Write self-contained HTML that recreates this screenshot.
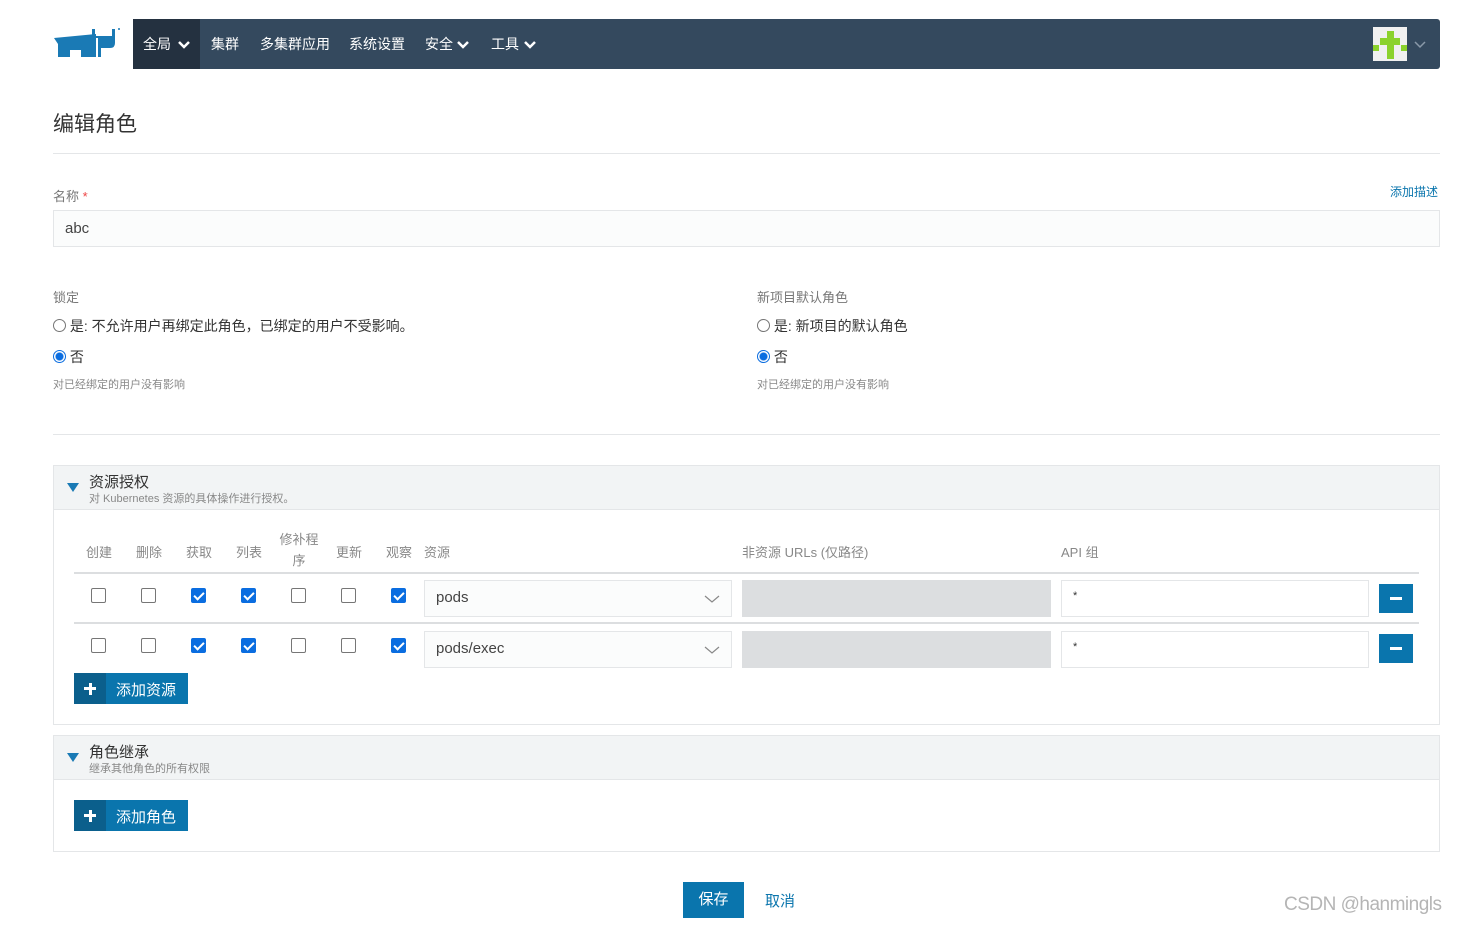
<!DOCTYPE html>
<html><head><meta charset="utf-8"><style>
*{box-sizing:border-box;margin:0;padding:0}
body{width:1465px;height:927px;background:#fff;font-family:"Liberation Sans","Noto Sans CJK SC",sans-serif;color:#333;position:relative;overflow:hidden}
.a{position:absolute}
.nav{left:133px;top:19px;width:1307px;height:50px;background:#34495e;border-radius:0 3px 3px 0}
.nav span{position:absolute;top:15px;color:#fff;font-size:14px}
.nav svg{position:absolute;top:21px}
.lbl{font-size:13px;color:#777}
.hr{height:1px;background:#e4e6e8;left:53px;width:1387px}
.radio{width:13px;height:13px;border:1px solid #767676;border-radius:50%;display:inline-block;vertical-align:-1px}
.radio.on{border:1px solid #0a6de0;background:radial-gradient(circle,#0a6de0 3.5px,#fff 4.5px)}
.cb{width:15px;height:15px;border:1px solid #767676;border-radius:2px;background:#fff}
.cb.on{background:#0a6de0;border-color:#0a6de0}
.cb.on:after{content:"";position:absolute;left:4px;top:1px;width:4px;height:8px;border:solid #fff;border-width:0 2px 2px 0;transform:rotate(45deg)}
.th{font-size:13px;color:#888}
.box{border:1px solid #e4e6e8;background:#fbfcfc}
.btn{background:#0a75ad;color:#fff;font-size:15px}
.sel svg{position:absolute;right:11px;top:13px}
</style></head><body>
<svg class="a" style="left:50px;top:24px" width="75" height="40" viewBox="0 0 75 40"><g fill="#1a7ab5"><path d="M4,14 L46,10 L46,33 L31,33 L31,26 L20,26 L20,33 L8,33 L8,20 Z"/><path d="M42,5 L45,5 L45,12 L62,12 L62,5 L65,5 L65,19 Q65,24 60,24 L51,24 L51,33 L48,33 L48,14 L42,14 Z"/></g><circle cx="69" cy="5" r="1" fill="#1a7ab5"/></svg>
<div class="a nav"><div class="a" style="left:0;top:0;width:67px;height:50px;background:#243140"></div>
<span style="left:10px">全局</span><svg style="left:45px" width="12" height="9" viewBox="0 0 12 9"><path d="M1 2l5 5 5-5" stroke="#fff" stroke-width="2.5" fill="none"/></svg>
<span style="left:78px">集群</span><span style="left:127px">多集群应用</span><span style="left:216px">系统设置</span>
<span style="left:292px">安全</span><svg style="left:324px" width="12" height="9" viewBox="0 0 12 9"><path d="M1 2l5 5 5-5" stroke="#fff" stroke-width="2.5" fill="none"/></svg>
<span style="left:358px">工具</span><svg style="left:391px" width="12" height="9" viewBox="0 0 12 9"><path d="M1 2l5 5 5-5" stroke="#fff" stroke-width="2.5" fill="none"/></svg>
<div class="a" style="left:1240px;top:8px;width:34px;height:34px;background:#f0f0f0"><div class="a" style="left:14px;top:4px;width:7px;height:28px;background:#8bd22c"></div><div class="a" style="left:7px;top:11px;width:20px;height:7px;background:#8bd22c"></div><div class="a" style="left:0;top:18px;width:34px;height:6px;background:linear-gradient(90deg,#8bd22c 6px,transparent 6px,transparent 28px,#8bd22c 28px)"></div></div>
<svg style="left:1281px" width="12" height="9" viewBox="0 0 12 9"><path d="M1 2l5 5 5-5" stroke="#8a99a8" stroke-width="1.5" fill="none"/></svg></div>
<div class="a" style="left:53px;top:108px;font-size:21px">编辑角色</div>
<div class="a hr" style="top:153px"></div>
<div class="a lbl" style="left:53px;top:186px">名称 <span style="color:#e44">*</span></div>
<div class="a" style="left:1390px;top:183px;font-size:12px;color:#0a75ad">添加描述</div>
<div class="a box" style="left:53px;top:210px;width:1387px;height:37px;padding:9px 11px;font-size:15px;color:#444">abc</div>
<div class="a lbl" style="left:53px;top:287px">锁定</div>
<div class="a" style="left:53px;top:316px;font-size:14px"><span class="radio"></span> 是: 不允许用户再绑定此角色，已绑定的用户不受影响。</div>
<div class="a" style="left:53px;top:347px;font-size:14px"><span class="radio on"></span> 否</div>
<div class="a" style="left:53px;top:376px;font-size:11px;color:#888">对已经绑定的用户没有影响</div>
<div class="a lbl" style="left:757px;top:287px">新项目默认角色</div>
<div class="a" style="left:757px;top:316px;font-size:14px"><span class="radio"></span> 是: 新项目的默认角色</div>
<div class="a" style="left:757px;top:347px;font-size:14px"><span class="radio on"></span> 否</div>
<div class="a" style="left:757px;top:376px;font-size:11px;color:#888">对已经绑定的用户没有影响</div>
<div class="a hr" style="top:434px"></div>
<div class="a" style="left:53px;top:465px;width:1387px;height:260px;border:1px solid #e4e6e8"></div>
<div class="a" style="left:53px;top:465px;width:1387px;height:45px;background:#f2f4f5;border:1px solid #e4e6e8"></div>
<div class="a" style="left:67px;top:483px;border-left:6px solid transparent;border-right:6px solid transparent;border-top:9px solid #1a7ab5"></div>
<div class="a" style="left:89px;top:471px;font-size:15px">资源授权</div>
<div class="a" style="left:89px;top:490px;font-size:11px;color:#888">对 Kubernetes 资源的具体操作进行授权。</div>
<div class="a th" style="left:86px;top:542px">创建</div><div class="a th" style="left:136px;top:542px">删除</div><div class="a th" style="left:186px;top:542px">获取</div><div class="a th" style="left:236px;top:542px">列表</div>
<div class="a th" style="left:279px;top:529px;width:40px;text-align:center;line-height:21px">修补程序</div>
<div class="a th" style="left:336px;top:542px">更新</div><div class="a th" style="left:386px;top:542px">观察</div><div class="a th" style="left:424px;top:542px">资源</div>
<div class="a th" style="left:742px;top:542px">非资源 URLs (仅路径)</div><div class="a th" style="left:1061px;top:542px">API 组</div>
<div class="a" style="left:74px;top:572px;width:1345px;height:2px;background:#dcdee0"></div>
<div class="a" style="left:74px;top:622px;width:1345px;height:2px;background:#dcdee0"></div>
<div class="a cb" style="left:91px;top:588px"></div><div class="a cb" style="left:141px;top:588px"></div><div class="a cb on" style="left:191px;top:588px"></div><div class="a cb on" style="left:241px;top:588px"></div><div class="a cb" style="left:291px;top:588px"></div><div class="a cb" style="left:341px;top:588px"></div><div class="a cb on" style="left:391px;top:588px"></div>
<div class="a cb" style="left:91px;top:638px"></div><div class="a cb" style="left:141px;top:638px"></div><div class="a cb on" style="left:191px;top:638px"></div><div class="a cb on" style="left:241px;top:638px"></div><div class="a cb" style="left:291px;top:638px"></div><div class="a cb" style="left:341px;top:638px"></div><div class="a cb on" style="left:391px;top:638px"></div>
<div class="a box sel" style="left:424px;top:580px;width:308px;height:37px;padding:8px 11px;font-size:15px;color:#444">pods<svg width="16" height="10" viewBox="0 0 16 10"><path d="M1 2l7 6 7-6" stroke="#888" stroke-width="1.2" fill="none"/></svg></div>
<div class="a box sel" style="left:424px;top:631px;width:308px;height:37px;padding:8px 11px;font-size:15px;color:#444">pods/exec<svg width="16" height="10" viewBox="0 0 16 10"><path d="M1 2l7 6 7-6" stroke="#888" stroke-width="1.2" fill="none"/></svg></div>
<div class="a" style="left:742px;top:580px;width:309px;height:37px;background:#dcdee0"></div>
<div class="a" style="left:742px;top:631px;width:309px;height:37px;background:#dcdee0"></div>
<div class="a box" style="left:1061px;top:580px;width:308px;height:37px;padding:9px 11px;font-size:11px;background:#fff">*</div>
<div class="a box" style="left:1061px;top:631px;width:308px;height:37px;padding:9px 11px;font-size:11px;background:#fff">*</div>
<div class="a btn" style="left:1379px;top:584px;width:34px;height:29px"><div class="a" style="left:11px;top:13px;width:12px;height:3px;background:#fff"></div></div>
<div class="a btn" style="left:1379px;top:634px;width:34px;height:29px"><div class="a" style="left:11px;top:13px;width:12px;height:3px;background:#fff"></div></div>
<div class="a btn" style="left:74px;top:673px;width:114px;height:31px"><div class="a" style="left:0;top:0;width:32px;height:31px;background:#0b5f8c"><div class="a" style="left:10px;top:14px;width:12px;height:3px;background:#fff"></div><div class="a" style="left:14.5px;top:9.5px;width:3px;height:12px;background:#fff"></div></div><span class="a" style="left:42px;top:6px">添加资源</span></div>
<div class="a" style="left:53px;top:735px;width:1387px;height:117px;border:1px solid #e4e6e8"></div>
<div class="a" style="left:53px;top:735px;width:1387px;height:45px;background:#f2f4f5;border:1px solid #e4e6e8"></div>
<div class="a" style="left:67px;top:753px;border-left:6px solid transparent;border-right:6px solid transparent;border-top:9px solid #1a7ab5"></div>
<div class="a" style="left:89px;top:741px;font-size:15px">角色继承</div>
<div class="a" style="left:89px;top:760px;font-size:11px;color:#888">继承其他角色的所有权限</div>
<div class="a btn" style="left:74px;top:800px;width:114px;height:31px"><div class="a" style="left:0;top:0;width:32px;height:31px;background:#0b5f8c"><div class="a" style="left:10px;top:14px;width:12px;height:3px;background:#fff"></div><div class="a" style="left:14.5px;top:9.5px;width:3px;height:12px;background:#fff"></div></div><span class="a" style="left:42px;top:6px">添加角色</span></div>
<div class="a btn" style="left:683px;top:882px;width:61px;height:36px;text-align:center;line-height:36px">保存</div>
<div class="a" style="left:765px;top:890px;font-size:15px;color:#0a75ad">取消</div>
<div class="a" style="left:1284px;top:894px;font-size:19px;color:#b5b5b5;letter-spacing:-0.5px">CSDN @hanmingls</div>
</body></html>
